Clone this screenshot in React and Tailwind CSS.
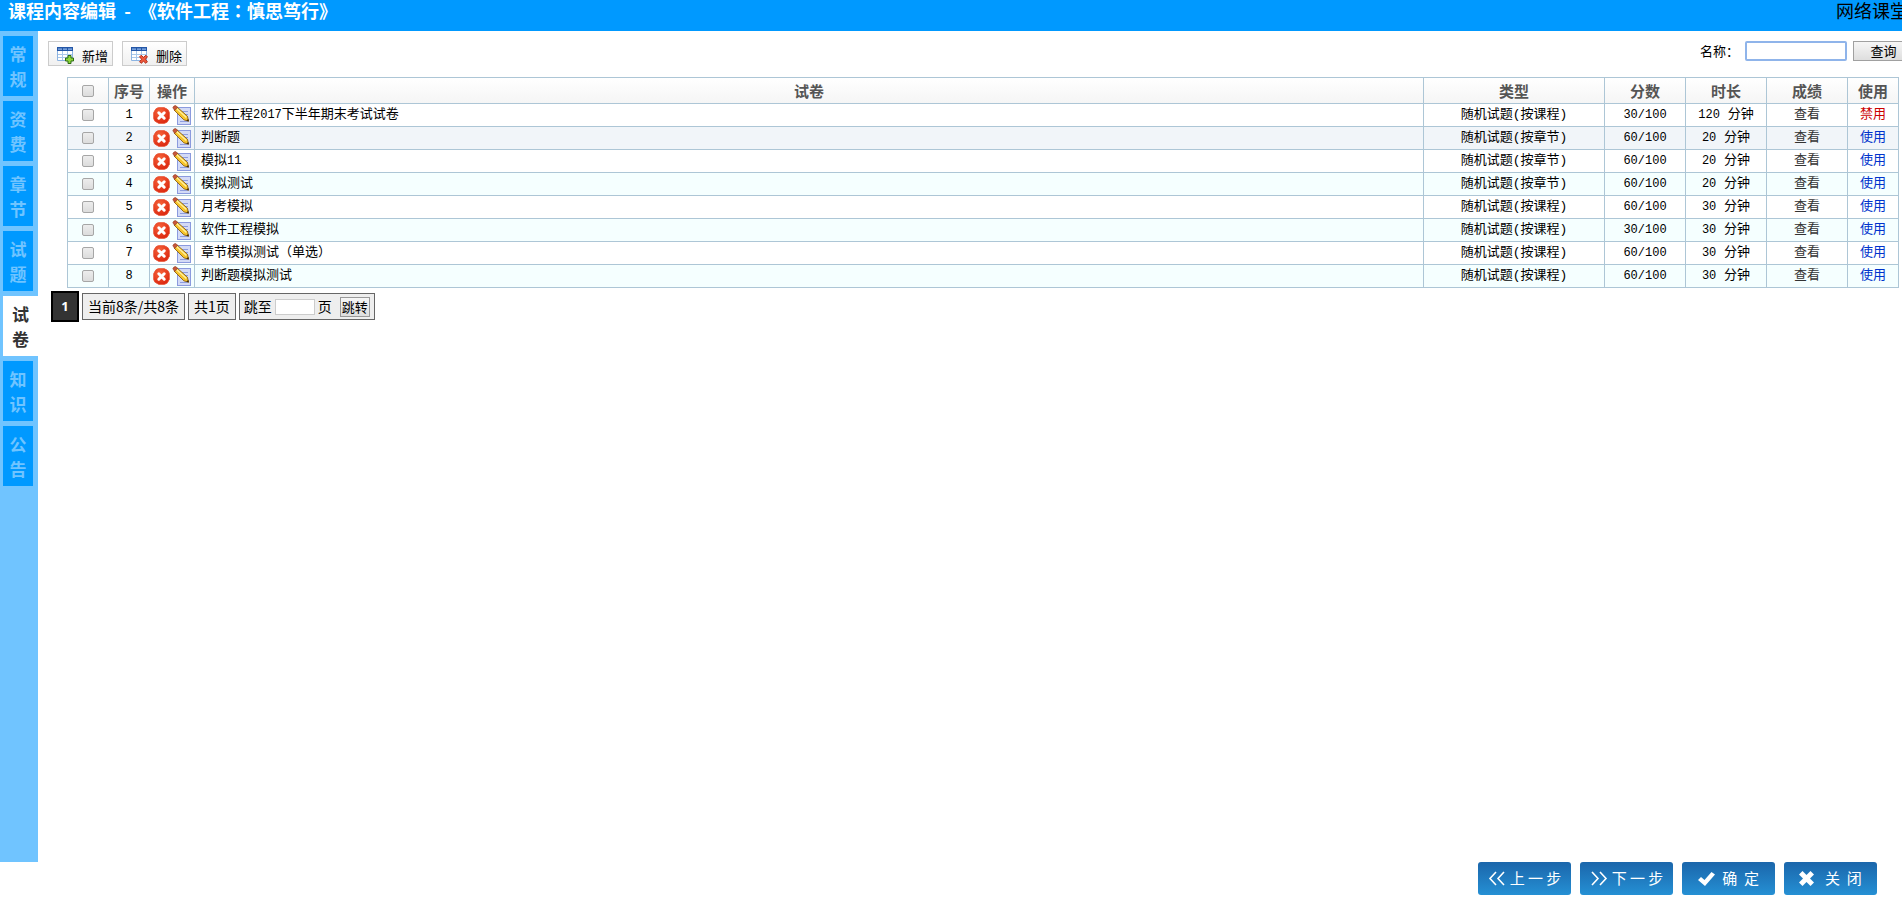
import React from "react";

const tabs = ["常规", "资费", "章节", "试题", "试卷", "知识", "公告"];

const rows = [
  ["软件工程2017下半年期末考试试卷", "随机试题(按课程)", "30/100", 120, false],
  ["判断题", "随机试题(按章节)", "60/100", 20, true],
  ["模拟11", "随机试题(按章节)", "60/100", 20, true],
  ["模拟测试", "随机试题(按章节)", "60/100", 20, true],
  ["月考模拟", "随机试题(按课程)", "60/100", 30, true],
  ["软件工程模拟", "随机试题(按课程)", "30/100", 30, true],
  ["章节模拟测试（单选）", "随机试题(按课程)", "60/100", 30, true],
  ["判断题模拟测试", "随机试题(按课程)", "60/100", 30, true],
];

const cell = "border border-[#adc6d6] p-0 text-center font-normal";
const boxFont = "font-['Noto_Sans_CJK_SC',sans-serif]";

/* Latin digits are set one size below the Chinese text around them. */
function Mixed({ text }) {
  return text
    .split(/([0-9/]+)/)
    .map((part, i) => (i % 2 ? <span key={i} className="text-xs leading-4">{part}</span> : part));
}

function GridIcon({ children }) {
  return (
    <svg width="17" height="17" viewBox="0 0 17 17" aria-hidden="true">
      <path d="M0.5 2v11.5h15V2z" fill="#fff" stroke="#8db4e2" />
      <path d="M0 0h16v4H0z" fill="#2456a6" />
      <path d="M1 1.4h4v1.4H1zM6 1.4h4v1.4H6zM11 1.4h4v1.4h-4z" fill="#8fb8ee" />
      <path d="M1 7.5h14M1 10.5h14M5.5 4v9M10.5 4v9" stroke="#a9c8ea" fill="none" />
      {children}
    </svg>
  );
}

function DeleteIcon() {
  return (
    <svg width="17" height="17" viewBox="0 0 17 17" aria-hidden="true">
      <defs>
        <radialGradient id="del" cx="0.4" cy="0.3" r="0.8">
          <stop offset="0" stopColor="#f8663c" />
          <stop offset="1" stopColor="#d8200a" />
        </radialGradient>
      </defs>
      <path
        d="M5.8 0.6h5.4Q16.4 2.6 16.4 5.8v5.4Q14.4 16.4 11.2 16.4H5.8Q.6 14.4 .6 11.2V5.8Q2.6 .6 5.8 .6z"
        fill="url(#del)"
        stroke="#ea5a3c"
        strokeWidth="0.8"
      />
      <path d="M5.8 5.8l5.4 5.4M11.2 5.8l-5.4 5.4" stroke="#fff" strokeWidth="3" strokeLinecap="round" />
    </svg>
  );
}

function EditIcon() {
  return (
    <svg width="20" height="21" viewBox="0 0 20 21" aria-hidden="true">
      <rect x="5.5" y="2.5" width="13" height="17" fill="#d3daf6" stroke="#8b9ade" />
      <path d="M10 6.5h6M12 9.5h4M8 16.5h8" stroke="#8f9ddd" />
      <path d="M4.8 1.8l10.6 9.4 1.2 5-4.8-1.4L2 5z" fill="#f7c52a" stroke="#8a5f10" strokeWidth="0.9" />
      <path d="M4.6 3.6l9.8 9" stroke="#fff0a0" strokeWidth="1.3" />
      <path d="M0.8 2.8Q1.6 .4 3.6 .6L5.6 2.2 2.8 5.4z" fill="#c9573a" stroke="#8f3c22" strokeWidth="0.6" />
      <path d="M14.4 15.5l2.4 0.9-0.5-2.5z" fill="#3a2708" />
    </svg>
  );
}

function StepButton({ icon, label }) {
  return (
    <button
      type="button"
      className="flex h-[33px] w-[93px] items-center justify-center gap-1 rounded-[3px] bg-linear-to-b from-[#1b66ab] to-[#2590d4] text-[15px] whitespace-pre text-white"
    >
      {icon}
      {label}
    </button>
  );
}

function Chevrons({ d }) {
  return (
    <svg width="18" height="15" viewBox="0 0 18 15" fill="none" stroke="#fff" strokeWidth="1.6" aria-hidden="true">
      <path d={d} />
    </svg>
  );
}

function ToolButton({ icon, label }) {
  return (
    <button
      type="button"
      className="flex h-[25px] w-[65px] items-center justify-between border border-[#ccc] bg-linear-to-b from-white to-[#f0f0f0] pt-1 pr-1 pl-2 text-[13px]"
    >
      {icon}
      {label}
    </button>
  );
}

const checkbox =
  "block mx-auto size-3 appearance-none rounded-[2px] border border-[#a6a6a6] bg-linear-to-b from-[#ededed] to-[#dcdcdc] checked:bg-[#3b82f6]";

export default function App() {
  return (
    <div className="min-h-screen overflow-hidden bg-white font-['Liberation_Mono','Noto_Sans_CJK_SC',monospace] text-[13px] text-black">
      <header className={"flex h-[31px] justify-between bg-[#0099ff] pl-2 text-[18px] leading-5 whitespace-nowrap " + boxFont}>
        <h1 className="font-bold whitespace-pre text-white">
          {"课程内容编辑  -  《软件工程"}
          <span className="font-['Noto_Sans_CJK_TC',sans-serif]">：</span>
          慎思笃行》
        </h1>
        <span className="w-[66px]">网络课堂</span>
      </header>

      <div className="flex">
        <nav className={"flex h-[calc(100vh-73px)] w-[38px] shrink-0 flex-col gap-[5px] bg-[#70c4ff] pt-[5px] pl-[3px] " + boxFont}>
          {tabs.map((t) => (
            <a
              key={t}
              href="#"
              className={
                "flex h-[60px] items-center justify-center text-center text-[17px] leading-[25px] font-bold " +
                (t === "试卷" ? "w-[35px] bg-white text-[#333]" : "w-[30px] bg-[#0099ff] text-[#70c4ff]")
              }
            >
              <span className="w-[17px]">{t}</span>
            </a>
          ))}
        </nav>

        <main className="min-w-0 flex-1">
          <div className={"flex items-start justify-between pt-[10px] pl-[10px] " + boxFont}>
            <div className="flex gap-[9px]">
              <ToolButton
                label="新增"
                icon={
                  <GridIcon>
                    <path d="M11 8.5h3v2.5h2.5v3H14v2.5h-3V14H8.5v-3H11z" fill="#8ed63a" stroke="#2b6a12" />
                  </GridIcon>
                }
              />
              <ToolButton
                label="删除"
                icon={
                  <GridIcon>
                    <path
                      d="M8.6 9.8l1.5-1.5 2.4 2 2.4-2 1.5 1.5-2 2.5 2 2.5-1.5 1.5-2.4-2-2.4 2-1.5-1.5 2-2.5z"
                      fill="#f05a3c"
                      stroke="#b02a18"
                    />
                  </GridIcon>
                }
              />
            </div>
            <form className="flex items-center">
              <label htmlFor="name" className="mr-[6px]">
                名称：
              </label>
              <input id="name" className="h-5 w-[102px] rounded-[2px] border-2 border-[#8fb4ea] bg-white px-1" />
              <button
                type="button"
                className="-mr-3 ml-[6px] h-5 w-[61px] border border-[#a0a0a0] bg-linear-to-b from-[#f6f6f6] to-[#dedede] leading-4"
              >
                查询
              </button>
            </form>
          </div>

          <div className="mt-[11px] mr-[3px] ml-[29px]">
            <table className="w-full table-fixed border-collapse leading-4">
              <colgroup>
                <col className="w-[41px]" />
                <col className="w-[41px]" />
                <col className="w-[45px]" />
                <col />
                <col className="w-[181px]" />
                <col className="w-[81px]" />
                <col className="w-[81px]" />
                <col className="w-[81px]" />
                <col className="w-[51px]" />
              </colgroup>
              <thead>
                <tr className="h-[26px] bg-linear-to-b from-white to-[#f5f5f5] text-[15px] text-[#555]">
                  <th className={cell}>
                    <input type="checkbox" aria-label="全选" className={checkbox} />
                  </th>
                  {["序号", "操作", "试卷", "类型", "分数", "时长", "成绩", "使用"].map((h) => (
                    <th key={h} className={"border border-[#adc6d6] p-0 text-center font-bold " + boxFont}>
                      {h}
                    </th>
                  ))}
                </tr>
              </thead>
              <tbody>
                {rows.map(([name, type, score, mins, on], i) => (
                  <tr key={name} className={"h-[23px] " + (i === 1 ? "bg-[#f1f5f9]" : i % 2 ? "bg-[#f5ffff]" : "bg-white")}>
                    <td className={cell}>
                      <input type="checkbox" aria-label={name} className={checkbox} />
                    </td>
                    <td className={cell}>
                      <Mixed text={String(i + 1)} />
                    </td>
                    <td className={cell}>
                      <div className="flex items-center justify-end gap-[2px] pr-[2px]">
                        <button type="button" aria-label="删除">
                          <DeleteIcon />
                        </button>
                        <button type="button" aria-label="编辑">
                          <EditIcon />
                        </button>
                      </div>
                    </td>
                    <td className="border border-[#adc6d6] p-0 pl-[6px] text-left">
                      <Mixed text={name} />
                    </td>
                    <td className={cell}>{type}</td>
                    <td className={cell}>
                      <Mixed text={score} />
                    </td>
                    <td className={cell}>
                      <Mixed text={mins + " 分钟"} />
                    </td>
                    <td className={cell}>
                      <a href="#" className="text-[#333]">
                        查看
                      </a>
                    </td>
                    <td className={cell}>
                      <a href="#" className={on ? "text-[#0033cc]" : "text-[#cc0000]"}>
                        {on ? "使用" : "禁用"}
                      </a>
                    </td>
                  </tr>
                ))}
              </tbody>
            </table>
          </div>

          <div className={"mt-[3px] ml-[13px] flex items-center gap-[3px] text-[14px] leading-5 " + boxFont}>
            <span className="flex h-[31px] w-7 items-center justify-center border-2 border-black bg-[#333] pb-[2px] font-['Open_Sans',sans-serif] text-[13px] font-bold text-white">
              1
            </span>
            <span className="flex h-[27px] items-center border border-[#666] bg-[#eee] px-[5px] pb-[2px]">当前8条/共8条</span>
            <span className="flex h-[27px] items-center border border-[#666] bg-[#eee] px-[5px] pb-[2px]">共1页</span>
            <form className="flex h-[27px] items-center border border-[#666] bg-[#eee] px-1">
              <label htmlFor="page" className="pb-[2px]">
                跳至
              </label>
              <input id="page" className="mr-[3px] ml-[3px] h-4 w-10 border border-[#ccc] bg-white px-1" />
              <span className="pb-[2px]">页</span>
              <button
                type="button"
                className="ml-2 h-5 w-[30px] border border-[#999] bg-linear-to-b from-[#f6f6f6] to-[#dedede] text-[13px] leading-4"
              >
                跳转
              </button>
            </form>
          </div>
        </main>
      </div>

      <footer className={"flex h-[42px] justify-end gap-[9px] pr-[25px] " + boxFont}>
        <StepButton label="上 一 步" icon={<Chevrons d="M8 1L2 7.5 8 14M16 1l-6 6.5 6 6.5" />} />
        <StepButton label="下 一 步" icon={<Chevrons d="M2 1l6 6.5L2 14M10 1l6 6.5-6 6.5" />} />
        <StepButton
          label=" 确  定"
          icon={
            <svg width="17" height="16" viewBox="0 0 17 16" aria-hidden="true">
              <path d="M0 9l3-3 3.5 3L13.5 1 17 3.5 7 15z" fill="#fff" />
            </svg>
          }
        />
        <StepButton
          label="  关  闭"
          icon={
            <svg width="15" height="15" viewBox="0 0 15 15" aria-hidden="true">
              <path d="M3.5 0l4 4 4-4L15 3.5l-4 4 4 4L11.5 15l-4-4-4 4L0 11.5l4-4-4-4z" fill="#fff" />
            </svg>
          }
        />
      </footer>
    </div>
  );
}
